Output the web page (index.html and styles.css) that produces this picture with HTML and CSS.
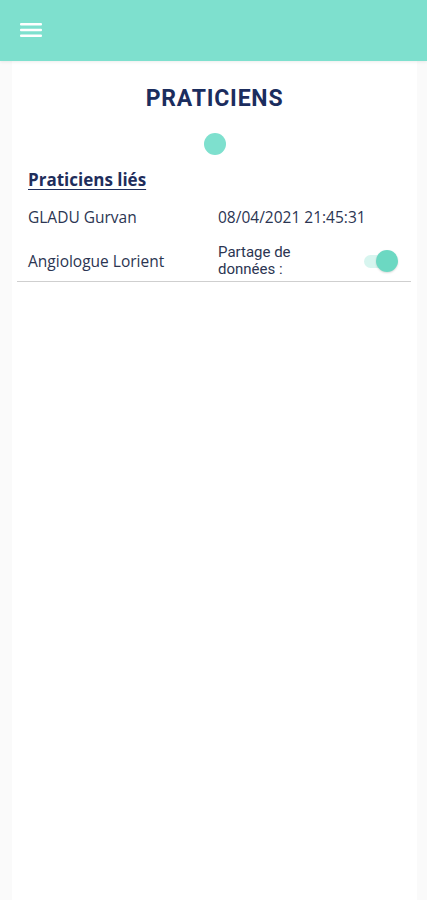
FILE: index.html
```html
<!DOCTYPE html>
<html lang="fr">
<head>
    <meta charset="UTF-8">
    <meta name="viewport" content="width=device-width, initial-scale=1.0">
    <title>Praticiens</title>
    <link rel="stylesheet" href="styles.css">
</head>
<body>
    <header class="topbar">
        <button class="menu-btn" aria-label="Menu">
            <svg width="22" height="16" viewBox="0 0 22 16">
                <rect x="0" y="1" width="22" height="2.6" rx="1" fill="#fff"/>
                <rect x="0" y="6.7" width="22" height="2.6" rx="1" fill="#fff"/>
                <rect x="0" y="12.4" width="22" height="2.6" rx="1" fill="#fff"/>
            </svg>
        </button>
    </header>

    <main class="card">
        <h1 class="title">PRATICIENS</h1>
        <div class="dot"></div>

        <h2 class="section">Praticiens liés</h2>

        <div class="row">
            <span class="cell">GLADU Gurvan</span>
            <span class="cell">08/04/2021 21:45:31</span>
        </div>
        <div class="row row-last">
            <span class="cell">Angiologue Lorient</span>
            <div class="cell share">
                <span class="share-label">Partage de<br>données :</span>
                <span class="toggle"><span class="thumb"></span></span>
            </div>
        </div>
    </main>
</body>
</html>
```

FILE: styles.css
```css
body {
    margin: 0;
    background: #fafafa;
    font-family: "Open Sans", "Noto Sans", sans-serif;
    color: #2b3552;
    min-height: 900px;
}

.topbar {
    height: 61px;
    background: #7ee0ce;
    display: flex;
    align-items: center;
    padding-left: 20px;
    box-shadow: 0 1px 3px rgba(0, 0, 0, 0.08);
    position: relative;
    z-index: 1;
}

.menu-btn {
    background: none;
    border: none;
    padding: 0;
    margin-top: -2px;
    display: flex;
}

.card {
    background: #fff;
    margin: 0 10px 0 12px;
    min-height: 839px;
    padding: 21px 5px 0;
    box-sizing: border-box;
}

.title {
    margin: 0;
    text-align: center;
    font-family: Roboto, sans-serif;
    font-weight: bold;
    font-size: 23px;
    letter-spacing: 0.8px;
    color: #1b2d5e;
    line-height: 34px;
}

.dot {
    width: 22px;
    height: 22px;
    border-radius: 50%;
    background: #7ee0ce;
    margin: 17px auto 12px;
}

.section {
    margin: 0 0 0 11px;
    font-family: "Open Sans", sans-serif;
    font-size: 17px;
    font-weight: bold;
    color: #1f2e5c;
    text-decoration: underline;
    text-underline-offset: 3px;
    line-height: 26px;
}

.row {
    display: flex;
    align-items: center;
    padding-left: 11px;
    height: 48px;
    font-size: 15.5px;
}

.row-last {
    height: 40px;
    border-bottom: 1px solid #cfcfcf;
    margin-right: 1px;
}

.cell {
    width: 190px;
}

.share {
    display: flex;
    align-items: center;
    width: 182px;
}

.share-label {
    font-family: Roboto, sans-serif;
    font-size: 15px;
    line-height: 17.5px;
    flex: 1;
}

.toggle {
    position: relative;
    width: 30px;
    height: 13px;
    border-radius: 7px;
    margin-right: 6px;
    background: #d7f5ef;
}

.thumb {
    position: absolute;
    right: -4px;
    top: -5px;
    width: 22px;
    height: 22px;
    border-radius: 50%;
    background: #6cd8c2;
    box-shadow: 0 1px 2px rgba(0, 0, 0, 0.15);
}
```
